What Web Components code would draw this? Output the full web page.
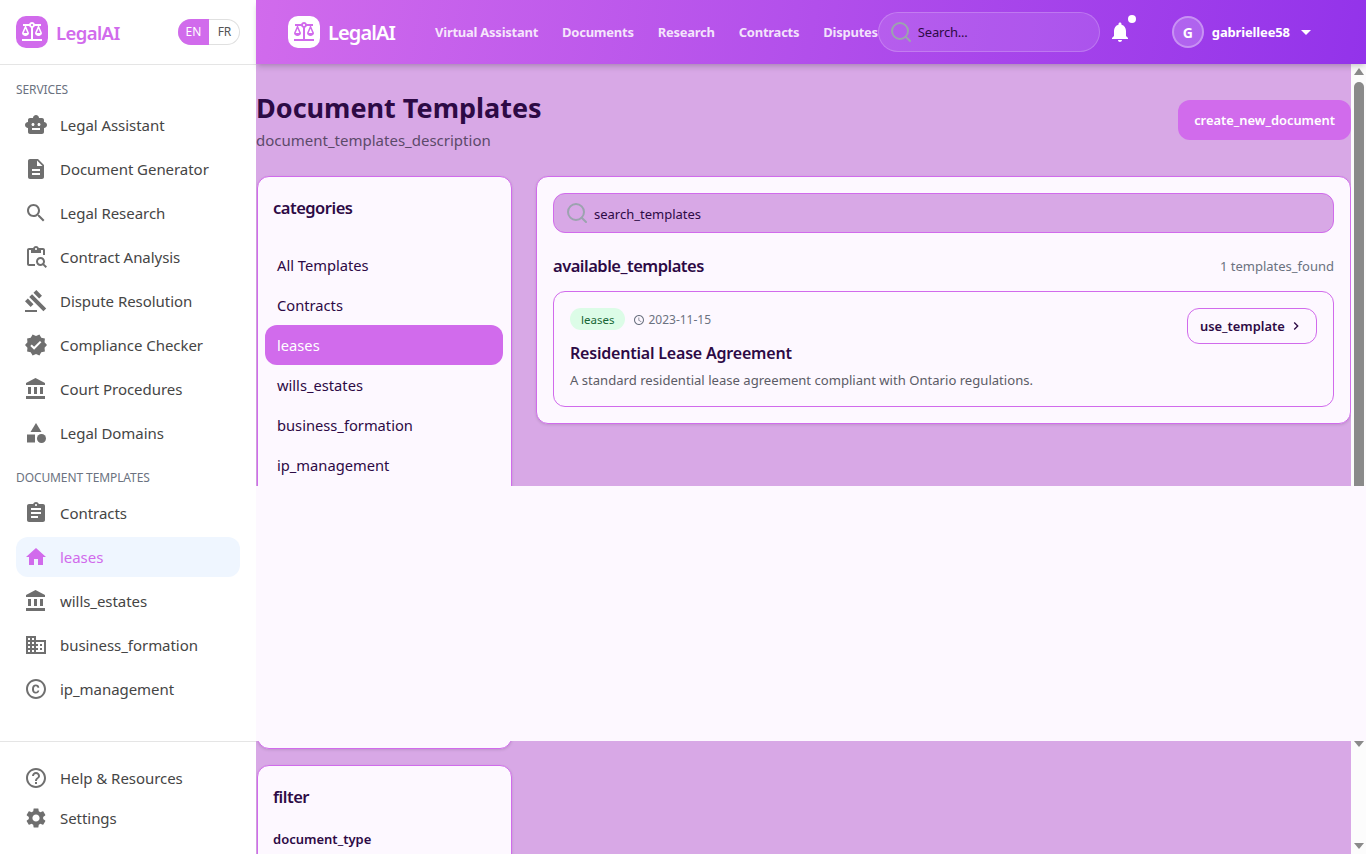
<!DOCTYPE html>
<html lang="en">
<head>
<meta charset="utf-8">
<title>LegalAI - Document Templates</title>
<style>
    html, body {
        margin: 0;
        height: 100%;
        overflow: hidden;
        font-family: "Noto Sans", "Open Sans", sans-serif;
    }
</style>
</head>
<body>
<legal-app>
    <legal-sidebar slot="side"></legal-sidebar>
    <top-bar slot="top"></top-bar>
    <templates-page></templates-page>
</legal-app>

<script>
const PATHS = {
    smart_toy: '<path d="M20 9V7c0-1.1-.9-2-2-2h-3c0-1.66-1.34-3-3-3S9 3.34 9 5H6c-1.1 0-2 .9-2 2v2c-1.66 0-3 1.34-3 3s1.34 3 3 3v4c0 1.1.9 2 2 2h12c1.1 0 2-.9 2-2v-4c1.66 0 3-1.34 3-3s-1.34-3-3-3zM7.5 11.5c0-.83.67-1.5 1.5-1.5s1.5.67 1.5 1.5S9.83 13 9 13s-1.5-.67-1.5-1.5zM16 17H8v-2h8v2zm-1-4c-.83 0-1.5-.67-1.5-1.5S14.17 10 15 10s1.5.67 1.5 1.5S15.83 13 15 13z"/>',
    description: '<path d="M14 2H6c-1.1 0-1.99.9-1.99 2L4 20c0 1.1.89 2 1.99 2H18c1.1 0 2-.9 2-2V8l-6-6zm2 16H8v-2h8v2zm0-4H8v-2h8v2zm-3-5V3.5L18.5 9H13z"/>',
    search: '<path d="M15.5 14h-.79l-.28-.27C15.41 12.59 16 11.11 16 9.5 16 5.91 13.09 3 9.5 3S3 5.91 3 9.5 5.91 16 9.5 16c1.61 0 3.09-.59 4.23-1.57l.27.28v.79l5 4.99L20.49 19l-4.99-5zm-6 0C7.01 14 5 11.99 5 9.5S7.01 5 9.5 5 14 7.01 14 9.5 11.99 14 9.5 14z"/>',
    paste_search: '<path d="M5 5h2v3h10V5h2v5h2V5c0-1.1-.9-2-2-2h-4.18C14.4 1.84 13.3 1 12 1S9.6 1.84 9.18 3H5c-1.1 0-2 .9-2 2v14c0 1.1.9 2 2 2h6v-2H5V5zm7-2c.55 0 1 .45 1 1s-.45 1-1 1-1-.45-1-1 .45-1 1-1z"/><path d="M20.3 18.9c.4-.7.7-1.5.7-2.4 0-2.5-2-4.5-4.5-4.5S12 14 12 16.5s2 4.5 4.5 4.5c.9 0 1.7-.3 2.4-.7l2.7 2.7 1.4-1.4-2.7-2.7zm-3.8.1c-1.4 0-2.5-1.1-2.5-2.5s1.1-2.5 2.5-2.5 2.5 1.1 2.5 2.5-1.1 2.5-2.5 2.5z"/>',
    gavel: '<path d="M1 21h12v2H1zM5.245 8.07l2.83-2.827 14.14 14.142-2.828 2.828zM12.317 1l5.657 5.656-2.83 2.83-5.654-5.66zM3.825 9.485l5.657 5.657-2.828 2.828-5.657-5.657z"/>',
    verified: '<path d="M23 12l-2.44-2.78.34-3.68-3.61-.82-1.89-3.18L12 3 8.6 1.54 6.71 4.72l-3.61.81.34 3.68L1 12l2.44 2.78-.34 3.69 3.61.82 1.89 3.18L12 21l3.4 1.46 1.89-3.18 3.61-.82-.34-3.68L23 12zm-12.91 4.72l-3.8-3.81 1.48-1.48 2.32 2.33 5.85-5.87 1.48 1.48-7.33 7.35z"/>',
    account_balance: '<path d="M4 10v7h3v-7H4zm6 0v7h3v-7h-3zM2 22h19v-3H2v3zm14-12v7h3v-7h-3zm-4.5-9L2 6v2h19V6l-9.5-5z"/>',
    category: '<path d="M12 2l-5.5 9h11z"/><circle cx="17.5" cy="17.5" r="4.5"/><path d="M3 13.5h8v8H3z"/>',
    assignment: '<path d="M19 3h-4.18C14.4 1.84 13.3 1 12 1c-1.3 0-2.4.84-2.82 2H5c-1.1 0-2 .9-2 2v14c0 1.1.9 2 2 2h14c1.1 0 2-.9 2-2V5c0-1.1-.9-2-2-2zm-7 0c.55 0 1 .45 1 1s-.45 1-1 1-1-.45-1-1 .45-1 1-1zm2 14H7v-2h7v2zm3-4H7v-2h10v2zm0-4H7V7h10v2z"/>',
    home: '<path d="M10 20v-6h4v6h5v-8h3L12 3 2 12h3v8z"/>',
    business: '<path d="M12 7V3H2v18h20V7H12zM6 19H4v-2h2v2zm0-4H4v-2h2v2zm0-4H4V9h2v2zm0-4H4V5h2v2zm4 12H8v-2h2v2zm0-4H8v-2h2v2zm0-4H8V9h2v2zm0-4H8V5h2v2zm10 12h-8v-2h2v-2h-2v-2h2v-2h-2V9h8v10zm-2-8h-2v2h2v-2zm0 4h-2v2h2v-2z"/>',
    copyright: '<path d="M11.88 9.14c1.28.06 1.61 1.15 1.63 1.66h1.79c-.08-1.98-1.49-3.19-3.45-3.19C9.64 7.61 8 9 8 12.14c0 1.94.93 4.24 3.84 4.24 2.22 0 3.41-1.65 3.44-2.95h-1.79c-.03.59-.45 1.38-1.63 1.44-1.32-.04-1.86-1.07-1.86-2.73 0-2.87 1.27-2.98 1.88-3zM12 2C6.48 2 2 6.48 2 12s4.48 10 10 10 10-4.48 10-10S17.52 2 12 2zm0 18c-4.41 0-8-3.59-8-8s3.59-8 8-8 8 3.59 8 8-3.59 8-8 8z"/>',
    help: '<path d="M11 18h2v-2h-2v2zm1-16C6.48 2 2 6.48 2 12s4.48 10 10 10 10-4.48 10-10S17.52 2 12 2zm0 18c-4.41 0-8-3.59-8-8s3.59-8 8-8 8 3.59 8 8-3.59 8-8 8zm0-14c-2.21 0-4 1.79-4 4h2c0-1.1.9-2 2-2s2 .9 2 2c0 2-3 1.75-3 5h2c0-2.25 3-2.5 3-5 0-2.21-1.79-4-4-4z"/>',
    settings: '<path d="M19.14 12.94c.04-.3.06-.61.06-.94 0-.32-.02-.64-.07-.94l2.03-1.58c.18-.14.23-.41.12-.61l-1.92-3.32c-.12-.22-.37-.29-.59-.22l-2.39.96c-.5-.38-1.03-.7-1.62-.94l-.36-2.54c-.04-.24-.24-.41-.48-.41h-3.84c-.24 0-.43.17-.47.41l-.36 2.54c-.59.24-1.13.57-1.62.94l-2.39-.96c-.22-.08-.47 0-.59.22L2.74 8.87c-.12.21-.08.47.12.61l2.03 1.58c-.05.3-.09.63-.09.94s.02.64.07.94l-2.03 1.58c-.18.14-.23.41-.12.61l1.92 3.32c.12.22.37.29.59.22l2.39-.96c.5.38 1.03.7 1.62.94l.36 2.54c.05.24.24.41.48.41h3.84c.24 0 .44-.17.47-.41l.36-2.54c.59-.24 1.13-.56 1.62-.94l2.39.96c.22.08.47 0 .59-.22l1.92-3.32c.12-.22.07-.47-.12-.61l-2.01-1.58zM12 15.6c-1.98 0-3.6-1.62-3.6-3.6s1.62-3.6 3.6-3.6 3.6 1.62 3.6 3.6-1.62 3.6-3.6 3.6z"/>',
    bell: '<path d="M12 22c1.1 0 2-.9 2-2h-4c0 1.1.89 2 2 2zm6-6v-5c0-3.07-1.64-5.64-4.5-6.32V4c0-.83-.67-1.5-1.5-1.5s-1.5.67-1.5 1.5v.68C7.63 5.36 6 7.92 6 11v5l-2 2v1h16v-1l-2-2z"/>',
    caret: '<path d="M7 10l5 5 5-5z"/>',
    chevron: '<path d="M10 6L8.59 7.41 13.17 12l-4.58 4.59L10 18l6-6z"/>',
    balance: '<path d="M13 7.83c.85-.3 1.53-.98 1.83-1.83H18l-3 7c0 1.66 1.57 3 3.5 3s3.5-1.34 3.5-3l-3-7h2V4h-6.17c-.41-1.17-1.52-2-2.83-2s-2.42.83-2.83 2H3v2h2l-3 7c0 1.66 1.57 3 3.5 3S9 14.66 9 13L6 6h3.17c.3.85.98 1.53 1.83 1.83V19H2v2h20v-2h-9V7.83zM20.37 13h-3.74l1.87-4.36L20.37 13zm-13 0H3.63L5.5 8.64 7.37 13zM12 6c-.55 0-1-.45-1-1 0-.55.45-1 1-1s1 .45 1 1c0 .55-.45 1-1 1z"/>',
    clock: '<path d="M11.99 2C6.47 2 2 6.48 2 12s4.47 10 9.99 10C17.52 22 22 17.52 22 12S17.52 2 11.99 2zM12 20c-4.42 0-8-3.58-8-8s3.58-8 8-8 8 3.58 8 8-3.58 8-8 8z"/><path d="M12.5 7H11v6l5.25 3.15.75-1.23-4.5-2.67z"/>'
};

class UiIcon extends HTMLElement {
    constructor() {
        super();
        this.attachShadow({ mode: 'open' });
    }

    connectedCallback() {
        const size = this.getAttribute('size') || '24';
        this.shadowRoot.innerHTML = `
            <style>
                :host { display: inline-flex; flex: none; width: ${size}px; height: ${size}px; }
                svg { width: 100%; height: 100%; fill: currentColor; display: block; }
            </style>
            <svg viewBox="0 0 24 24">${PATHS[this.getAttribute('name')] || ''}</svg>
        `;
    }
}

// stroked lens used inside the two search inputs
class LensIcon extends HTMLElement {
    constructor() {
        super();
        this.attachShadow({ mode: 'open' });
        this.shadowRoot.innerHTML = `
            <style>
                :host { display: inline-flex; flex: none; width: 20px; height: 20px; color: #9ca3af; }
                svg { width: 100%; height: 100%; fill: none; stroke: currentColor; stroke-width: 2; stroke-linecap: round; display: block; }
            </style>
            <svg viewBox="0 0 20 20"><circle cx="9" cy="9" r="8"/><path d="M19 19l-4.3-4.3"/></svg>
        `;
    }
}

class LogoTile extends HTMLElement {
    constructor() {
        super();
        this.attachShadow({ mode: 'open' });
        this.shadowRoot.innerHTML = `
            <style>
                :host {
                    display: inline-flex;
                    align-items: center;
                    gap: 8px;
                    font-size: var(--logo-size, 18.5px);
                    font-weight: 600;
                    letter-spacing: var(--logo-spacing, -0.6px);
                    color: var(--logo-text, #d16bec);
                }
                .tile {
                    width: 32px;
                    height: 32px;
                    border-radius: 10px;
                    display: flex;
                    align-items: center;
                    justify-content: center;
                    background: var(--tile-bg, #d16bec);
                    color: var(--tile-fg, #fff);
                }
            </style>
            <span class="tile"><ui-icon name="balance"></ui-icon></span>
            <span>LegalAI</span>
        `;
    }
}

class SideItem extends HTMLElement {
    constructor() {
        super();
        this.attachShadow({ mode: 'open' });
    }

    connectedCallback() {
        this.shadowRoot.innerHTML = `
            <style>
                :host {
                    display: flex;
                    align-items: center;
                    gap: 12px;
                    height: 40px;
                    padding: 0 8px;
                    border-radius: 12px;
                    font-size: 15px;
                    letter-spacing: -0.05px;
                    color: #454545;
                }
                :host([active]) { background: #eff6ff; color: #d16bec; }
                ui-icon { color: #6f6f6f; }
                :host([active]) ui-icon { color: #d16bec; }
            </style>
            <ui-icon name="${this.getAttribute('icon')}"></ui-icon>
            <slot></slot>
        `;
    }
}

class SideSection extends HTMLElement {
    constructor() {
        super();
        this.attachShadow({ mode: 'open' });
    }

    connectedCallback() {
        this.shadowRoot.innerHTML = `
            <style>
                :host { display: block; }
                .label {
                    height: 16px;
                    line-height: 18px;
                    margin-bottom: 8px;
                    font-size: 12px;
                    letter-spacing: -0.1px;
                    color: #6b7280;
                    text-transform: uppercase;
                }
                .items { display: flex; flex-direction: column; gap: 4px; }
            </style>
            <div class="label">${this.getAttribute('label')}</div>
            <div class="items"><slot></slot></div>
        `;
    }
}

class LegalSidebar extends HTMLElement {
    constructor() {
        super();
        this.attachShadow({ mode: 'open' });
        this.shadowRoot.innerHTML = `
            <style>
                :host {
                    display: flex;
                    flex-direction: column;
                    width: 256px;
                    height: 100%;
                    background: #fff;
                    box-sizing: border-box;
                }
                .brand {
                    display: flex;
                    align-items: center;
                    justify-content: space-between;
                    height: 64px;
                    padding: 0 16px;
                    border-bottom: 1px solid #e5e5e5;
                }
                .lang {
                    display: flex;
                    height: 26px;
                    box-sizing: border-box;
                    border-radius: 13px;
                    overflow: hidden;
                    font-size: 12px;
                    line-height: 26px;
                    text-align: center;
                    box-shadow: inset 0 0 0 1px #e0e0e0;
                }
                .lang span { width: 31px; color: #555; }
                .lang .on { background: #d16bec; color: #fff; }
                nav {
                    flex: 1;
                    display: flex;
                    flex-direction: column;
                    gap: 16px;
                    padding: 16px 16px 0;
                }
                .foot {
                    padding: 16px;
                    border-top: 1px solid #e5e5e5;
                }
            </style>
            <div class="brand">
                <logo-tile></logo-tile>
                <div class="lang"><span class="on">EN</span><span>FR</span></div>
            </div>
            <nav>
                <side-section label="Services">
                    <side-item icon="smart_toy">Legal Assistant</side-item>
                    <side-item icon="description">Document Generator</side-item>
                    <side-item icon="search">Legal Research</side-item>
                    <side-item icon="paste_search">Contract Analysis</side-item>
                    <side-item icon="gavel">Dispute Resolution</side-item>
                    <side-item icon="verified">Compliance Checker</side-item>
                    <side-item icon="account_balance">Court Procedures</side-item>
                    <side-item icon="category">Legal Domains</side-item>
                </side-section>
                <side-section label="Document Templates">
                    <side-item icon="assignment">Contracts</side-item>
                    <side-item icon="home" active>leases</side-item>
                    <side-item icon="account_balance">wills_estates</side-item>
                    <side-item icon="business">business_formation</side-item>
                    <side-item icon="copyright">ip_management</side-item>
                </side-section>
            </nav>
            <div class="foot">
                <side-item icon="help">Help &amp; Resources</side-item>
                <side-item icon="settings">Settings</side-item>
            </div>
        `;
    }
}

class TopBar extends HTMLElement {
    constructor() {
        super();
        this.attachShadow({ mode: 'open' });
        this.shadowRoot.innerHTML = `
            <style>
                :host {
                    display: flex;
                    align-items: center;
                    flex: none;
                    position: relative;
                    z-index: 2;
                    height: 64px;
                    padding-left: 32px;
                    color: #fff;
                    background: linear-gradient(100deg, #d16bec 0%, #9333ea 100%);
                    box-shadow: 0 4px 6px -1px rgba(0,0,0,.15), 0 2px 4px -2px rgba(0,0,0,.1);
                    --logo-text: #fff;
                    --logo-size: 20px;
                    --logo-spacing: -0.9px;
                    --tile-bg: #fff;
                    --tile-fg: #d16bec;
                    font-size: 13px;
                    font-weight: 700;
                }
                .links {
                    display: flex;
                    gap: 24px;
                    margin-left: 40px;
                    color: rgba(255,255,255,.85);
                    letter-spacing: -0.25px;
                }
                .find {
                    display: flex;
                    align-items: center;
                    gap: 7px;
                    box-sizing: border-box;
                    width: 222px;
                    height: 40px;
                    padding-left: 12px;
                    border: 1px solid rgba(255,255,255,.2);
                    border-radius: 20px;
                    background: rgba(255,255,255,.1);
                    color: #2d0a45;
                    font-size: 13px;
                    font-weight: 400;
                    letter-spacing: -0.2px;
                }
                .bell {
                    position: relative;
                    display: flex;
                    margin-left: 8px;
                }
                .dot {
                    position: absolute;
                    top: -5px;
                    right: -4px;
                    width: 8px;
                    height: 8px;
                    border-radius: 50%;
                    background: #fff;
                }
                .avatar {
                    display: flex;
                    align-items: center;
                    justify-content: center;
                    box-sizing: border-box;
                    width: 32px;
                    height: 32px;
                    margin-left: 40px;
                    border: 2px solid rgba(255,255,255,.3);
                    border-radius: 50%;
                    background: rgba(255,255,255,.2);
                    font-size: 14px;
                }
                .user { margin-left: 8px; letter-spacing: -0.15px; }
                .user-caret { margin-left: 4px; }
            </style>
            <logo-tile></logo-tile>
            <div class="links">
                <span>Virtual Assistant</span>
                <span>Documents</span>
                <span>Research</span>
                <span>Contracts</span>
                <span>Disputes</span>
            </div>
            <div class="find"><lens-icon></lens-icon><span>Search...</span></div>
            <div class="bell"><ui-icon name="bell"></ui-icon><span class="dot"></span></div>
            <div class="avatar">G</div>
            <span class="user">gabriellee58</span>
            <ui-icon class="user-caret" name="caret"></ui-icon>
        `;
    }
}

// drawn scrollbar: the upper arrow and thumb, then the arrows seen under the white panel
class PageScrollbar extends HTMLElement {
    constructor() {
        super();
        this.attachShadow({ mode: 'open' });
        this.shadowRoot.innerHTML = `
            <style>
                :host {
                    display: flex;
                    flex-direction: column;
                    align-items: center;
                    flex: none;
                    width: 15px;
                    background: #fcfcfc;
                }
                .up, .down { width: 0; height: 0; border-left: 5px solid transparent; border-right: 5px solid transparent; }
                .up { margin-top: 4px; border-bottom: 7px solid #8a8a8a; }
                .thumb { width: 10px; height: 654px; margin-top: 7px; border-radius: 5px; background: #8a8a8a; }
                .down { border-top: 6px solid #8a8a8a; }
                .first { margin-top: 5px; }
                .last { margin-top: 96px; }
            </style>
            <span class="up"></span>
            <span class="thumb"></span>
            <span class="down first"></span>
            <span class="down last"></span>
        `;
    }
}

class CategoryItem extends HTMLElement {
    constructor() {
        super();
        this.attachShadow({ mode: 'open' });
        this.shadowRoot.innerHTML = `
            <style>
                :host {
                    display: flex;
                    align-items: center;
                    height: 40px;
                    padding: 0 12px;
                    border-radius: 12px;
                    font-size: 14.7px;
                    color: #2d0a45;
                }
                :host([active]) { background: #d16bec; color: #fff; }
            </style>
            <slot></slot>
        `;
    }
}

class PanelCard extends HTMLElement {
    constructor() {
        super();
        this.attachShadow({ mode: 'open' });
        this.shadowRoot.innerHTML = `
            <style>
                :host {
                    display: block;
                    box-sizing: border-box;
                    background: #fdf8ff;
                    border: 1px solid #d16bec;
                    border-radius: 12px;
                    box-shadow: 0 1px 3px rgba(0,0,0,.12);
                }
            </style>
            <slot></slot>
        `;
    }
}

class TemplateCard extends HTMLElement {
    constructor() {
        super();
        this.attachShadow({ mode: 'open' });
        this.shadowRoot.innerHTML = `
            <style>
                :host {
                    display: flex;
                    justify-content: space-between;
                    align-items: flex-start;
                    box-sizing: border-box;
                    height: 116px;
                    padding: 16px;
                    border: 1px solid #d16bec;
                    border-radius: 12px;
                    color: #2d0a45;
                }
                .meta { display: flex; align-items: center; height: 22px; font-size: 12px; color: #6b7280; }
                .date { padding-top: 1px; }
                .tag {
                    height: 22px;
                    line-height: 24px;
                    padding: 0 11px;
                    margin-right: 8px;
                    border-radius: 11px;
                    background: #dcfce7;
                    color: #166534;
                    font-size: 11.5px;
                }
                ui-icon.clock { margin: 1px 3px 0 0; }
                h3 { margin: 11px 0 5px; font-size: 16px; line-height: 24px; font-weight: 600; letter-spacing: -0.2px; }
                p { margin: 0; font-size: 13.1px; line-height: 20px; color: #5c5c66; }
                button {
                    display: flex;
                    align-items: center;
                    justify-content: space-between;
                    width: 130px;
                    height: 36px;
                    padding: 0 12px;
                    border: 1px solid #d16bec;
                    border-radius: 12px;
                    background: transparent;
                    color: #2d0a45;
                    font: 600 12.9px "Noto Sans", sans-serif;
                }
            </style>
            <div>
                <div class="meta">
                    <span class="tag">leases</span>
                    <ui-icon class="clock" name="clock" size="12"></ui-icon>
                    <span class="date">2023-11-15</span>
                </div>
                <h3>Residential Lease Agreement</h3>
                <p>A standard residential lease agreement compliant with Ontario regulations.</p>
            </div>
            <button>use_template <ui-icon name="chevron" size="16"></ui-icon></button>
        `;
    }
}

class TemplatesPage extends HTMLElement {
    constructor() {
        super();
        this.attachShadow({ mode: 'open' });
        this.shadowRoot.innerHTML = `
            <style>
                :host {
                    display: block;
                    flex: 1;
                    min-width: 0;
                    overflow: hidden;
                    color: #2d0a45;
                }
                .head {
                    display: flex;
                    justify-content: space-between;
                    align-items: flex-start;
                    height: 60px;
                    padding-top: 26px;
                    margin-bottom: 26px;
                }
                h1 { margin: 0; font-size: 27px; line-height: 36px; font-weight: 700; }
                .sub { margin-top: 2px; font-size: 15px; line-height: 24px; color: #5c4a6a; }
                .create {
                    height: 40px;
                    margin-top: 10px;
                    padding: 0 16px;
                    border: 0;
                    border-radius: 12px;
                    background: #d16bec;
                    color: #fff;
                    font: 600 12.9px "Noto Sans", sans-serif;
                }
                .cols {
                    display: grid;
                    grid-template-columns: 255px 1fr;
                    gap: 24px;
                    align-items: start;
                    padding-left: 1px;
                }
                .left { display: flex; flex-direction: column; gap: 16px; }
                .cats { height: 573px; padding: 17px 8px 16px 7px; }
                h2 { margin: 0; font-size: 16.5px; line-height: 28px; font-weight: 600; letter-spacing: -0.5px; }
                .cats h2 { padding-left: 8px; margin-bottom: 23px; }
                .filter { padding: 17px 16px 16px 15px; }
                .filter h2 { margin-bottom: 18px; }
                .filter h4 { margin: 0; font-size: 13px; line-height: 20px; font-weight: 600; }
                .right { padding: 16px 16px 16px 16px; }
                .box {
                    display: flex;
                    align-items: center;
                    gap: 7px;
                    box-sizing: border-box;
                    height: 40px;
                    padding-left: 13px;
                    border: 1px solid #d16bec;
                    border-radius: 12px;
                    background: #d8a8e6;
                    font-size: 13px;
                    line-height: 20px;
                }
                .box span { padding-top: 2px; }
                .found {
                    display: flex;
                    justify-content: space-between;
                    align-items: center;
                    margin: 19px 0 11px;
                }
                .found span { font-size: 13px; color: #6b7280; }
            </style>
            <div class="head">
                <div>
                    <h1>Document Templates</h1>
                    <div class="sub">document_templates_description</div>
                </div>
                <button class="create">create_new_document</button>
            </div>
            <div class="cols">
                <div class="left">
                    <panel-card class="cats">
                        <h2>categories</h2>
                        <category-item>All Templates</category-item>
                        <category-item>Contracts</category-item>
                        <category-item active>leases</category-item>
                        <category-item>wills_estates</category-item>
                        <category-item>business_formation</category-item>
                        <category-item>ip_management</category-item>
                    </panel-card>
                    <panel-card class="filter">
                        <h2>filter</h2>
                        <h4>document_type</h4>
                    </panel-card>
                </div>
                <panel-card class="right">
                    <div class="box"><lens-icon></lens-icon><span>search_templates</span></div>
                    <div class="found"><h2>available_templates</h2><span>1 templates_found</span></div>
                    <template-card></template-card>
                </panel-card>
            </div>
        `;
    }
}

class LegalApp extends HTMLElement {
    constructor() {
        super();
        this.attachShadow({ mode: 'open' });
        this.shadowRoot.innerHTML = `
            <style>
                :host { display: flex; height: 854px; background: #d8a8e6; }
                .main { position: relative; flex: 1; min-width: 0; display: flex; flex-direction: column; }
                .below { flex: 1; min-height: 0; display: flex; }
                /* blank sheet lying over the page between y 486 and y 741 */
                .sheet {
                    position: absolute;
                    z-index: 3;
                    left: 0;
                    right: 0;
                    top: 486px;
                    height: 255px;
                    background: #fdf8ff;
                }
            </style>
            <slot name="side"></slot>
            <div class="main">
                <slot name="top"></slot>
                <div class="below">
                    <slot></slot>
                    <page-scrollbar></page-scrollbar>
                </div>
                <div class="sheet"></div>
            </div>
        `;
    }
}

customElements.define('ui-icon', UiIcon);
customElements.define('lens-icon', LensIcon);
customElements.define('logo-tile', LogoTile);
customElements.define('side-item', SideItem);
customElements.define('side-section', SideSection);
customElements.define('legal-sidebar', LegalSidebar);
customElements.define('top-bar', TopBar);
customElements.define('page-scrollbar', PageScrollbar);
customElements.define('category-item', CategoryItem);
customElements.define('panel-card', PanelCard);
customElements.define('template-card', TemplateCard);
customElements.define('templates-page', TemplatesPage);
customElements.define('legal-app', LegalApp);
</script>
</body>
</html>
